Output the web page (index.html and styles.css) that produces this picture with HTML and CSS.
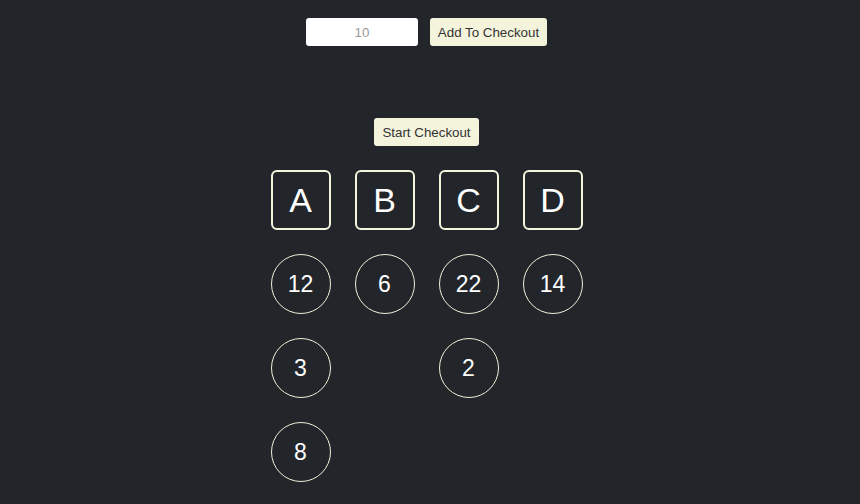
FILE: index.html
```html
<!DOCTYPE html>
<html>
<head>
<meta charset="utf-8">
<link rel="stylesheet" href="styles.css">
</head>
<body>
<div class="app">
  <div class="form">
    <input class="qty" type="text" value="10">
    <button class="btn">Add To Checkout</button>
  </div>
  <button class="btn start">Start Checkout</button>
  <div class="lanes">
    <div class="lane">
      <div class="box">A</div>
      <div class="item">12</div>
      <div class="item">3</div>
      <div class="item">8</div>
    </div>
    <div class="lane">
      <div class="box">B</div>
      <div class="item">6</div>
    </div>
    <div class="lane">
      <div class="box">C</div>
      <div class="item">22</div>
      <div class="item">2</div>
    </div>
    <div class="lane">
      <div class="box">D</div>
      <div class="item">14</div>
    </div>
  </div>
</div>
</body>
</html>
```
FILE: styles.css
```css
html, body {
  margin: 0;
  padding: 0;
  background: #22262b;
  height: 100%;
  overflow: hidden;
}
.app {
  display: flex;
  flex-direction: column;
  align-items: center;
  padding-top: 18px;
  padding-right: 7px;
  font-family: "Liberation Sans", Arial, sans-serif;
  color: #fff;
}
.form {
  display: flex;
  gap: 12px;
}
.qty {
  box-sizing: border-box;
  width: 112px;
  height: 28px;
  border: none;
  border-radius: 3px;
  background: #fff;
  text-align: center;
  font-family: "Liberation Sans", Arial, sans-serif;
  font-size: 13.33px;
  color: #999;
  padding: 0;
  outline: none;
}
.btn {
  box-sizing: border-box;
  height: 28px;
  padding: 0 12px;
  border: none;
  border-radius: 3px;
  background: #f4f4dd;
  color: #333;
  font-family: "Liberation Sans", Arial, sans-serif;
  font-size: 13.33px;
}
.form .btn { width: 117px; padding: 0; }
.start {
  margin-top: 72px;
  width: 105px;
  padding: 0;
}
.lanes {
  margin-top: 24px;
  display: flex;
  gap: 24px;
}
.lane {
  display: flex;
  flex-direction: column;
  gap: 24px;
  width: 60px;
}
.box {
  box-sizing: border-box;
  width: 60px;
  height: 60px;
  border: 2px solid #f4f4dd;
  border-radius: 6px;
  display: flex;
  align-items: center;
  justify-content: center;
  font-size: 34px;
}
.item {
  box-sizing: border-box;
  width: 60px;
  height: 60px;
  border: 1px solid #f0f0d8;
  border-radius: 50%;
  display: flex;
  align-items: center;
  justify-content: center;
  font-size: 23px;
}
```
